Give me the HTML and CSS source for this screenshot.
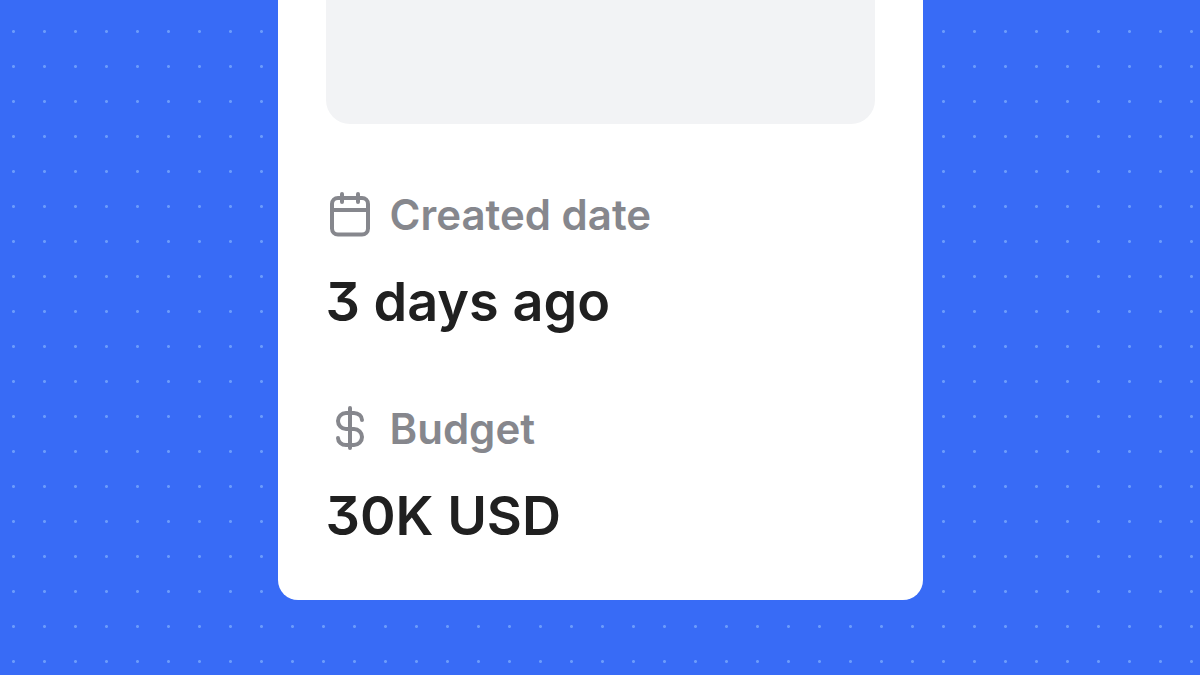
FILE: index.html
```
<!DOCTYPE html>
<html lang="en">
<head>
    <meta charset="utf-8">
    <title>Project details</title>
    <link rel="stylesheet" href="styles.css">
</head>
<body>
    <main class="card">
        <div class="preview"></div>
        <dl class="details">
            <div class="detail">
                <dt class="label">
                    <svg class="icon" viewBox="0 0 48 48" aria-hidden="true">
                        <rect x="6" y="8" width="36" height="36.5" rx="6" />
                        <path d="M6 20h36M16 4v8M32 4v8" />
                    </svg>
                    Created date
                </dt>
                <dd class="value">3 days ago</dd>
            </div>
            <div class="detail">
                <dt class="label">
                    <svg class="icon" viewBox="0 0 48 48" aria-hidden="true">
                        <path d="M24 4v40M36 16a8 7 0 0 0-8-7h-8a8 8 0 0 0 0 16h8a8 8 0 0 1 0 16h-8a8 7 0 0 1-8-7" />
                    </svg>
                    Budget
                </dt>
                <dd class="value">30K USD</dd>
            </div>
        </dl>
    </main>
</body>
</html>
```
FILE: styles.css
```
* {
    box-sizing: border-box;
}

body {
    margin: 0;
    min-height: 100vh;
    padding-bottom: 75px;
    background-color: #386bf6;
    background-image: radial-gradient(circle, #6b9bfb 1px, transparent 2px);
    background-size: 31px 35px;
    background-position: -2px 14px;
    font-family: Inter, "Liberation Sans", sans-serif;
    font-weight: 600;
}

.card {
    width: 53.75%;
    margin: 0 auto;
    padding: 0 48px 48px;
    background: #fff;
    border-radius: 0 0 20px 20px;
}

.preview {
    height: 124px;
    background: #f2f3f5;
    border-radius: 0 0 24px 24px;
}

.details {
    display: grid;
    gap: 62px;
    margin: 0;
    padding-top: 62px;
}

.label {
    display: flex;
    align-items: center;
    gap: 16px;
    height: 56px;
    color: #86878d;
    font-size: 42px;
}

.icon {
    width: 48px;
    height: 48px;
    fill: none;
    stroke: currentColor;
    stroke-width: 4;
    stroke-linecap: round;
    stroke-linejoin: round;
}

.value {
    margin: 24px 0 0;
    color: #202020;
    font-size: 54px;
    line-height: 72px;
    font-feature-settings: "cv09";
}
```
